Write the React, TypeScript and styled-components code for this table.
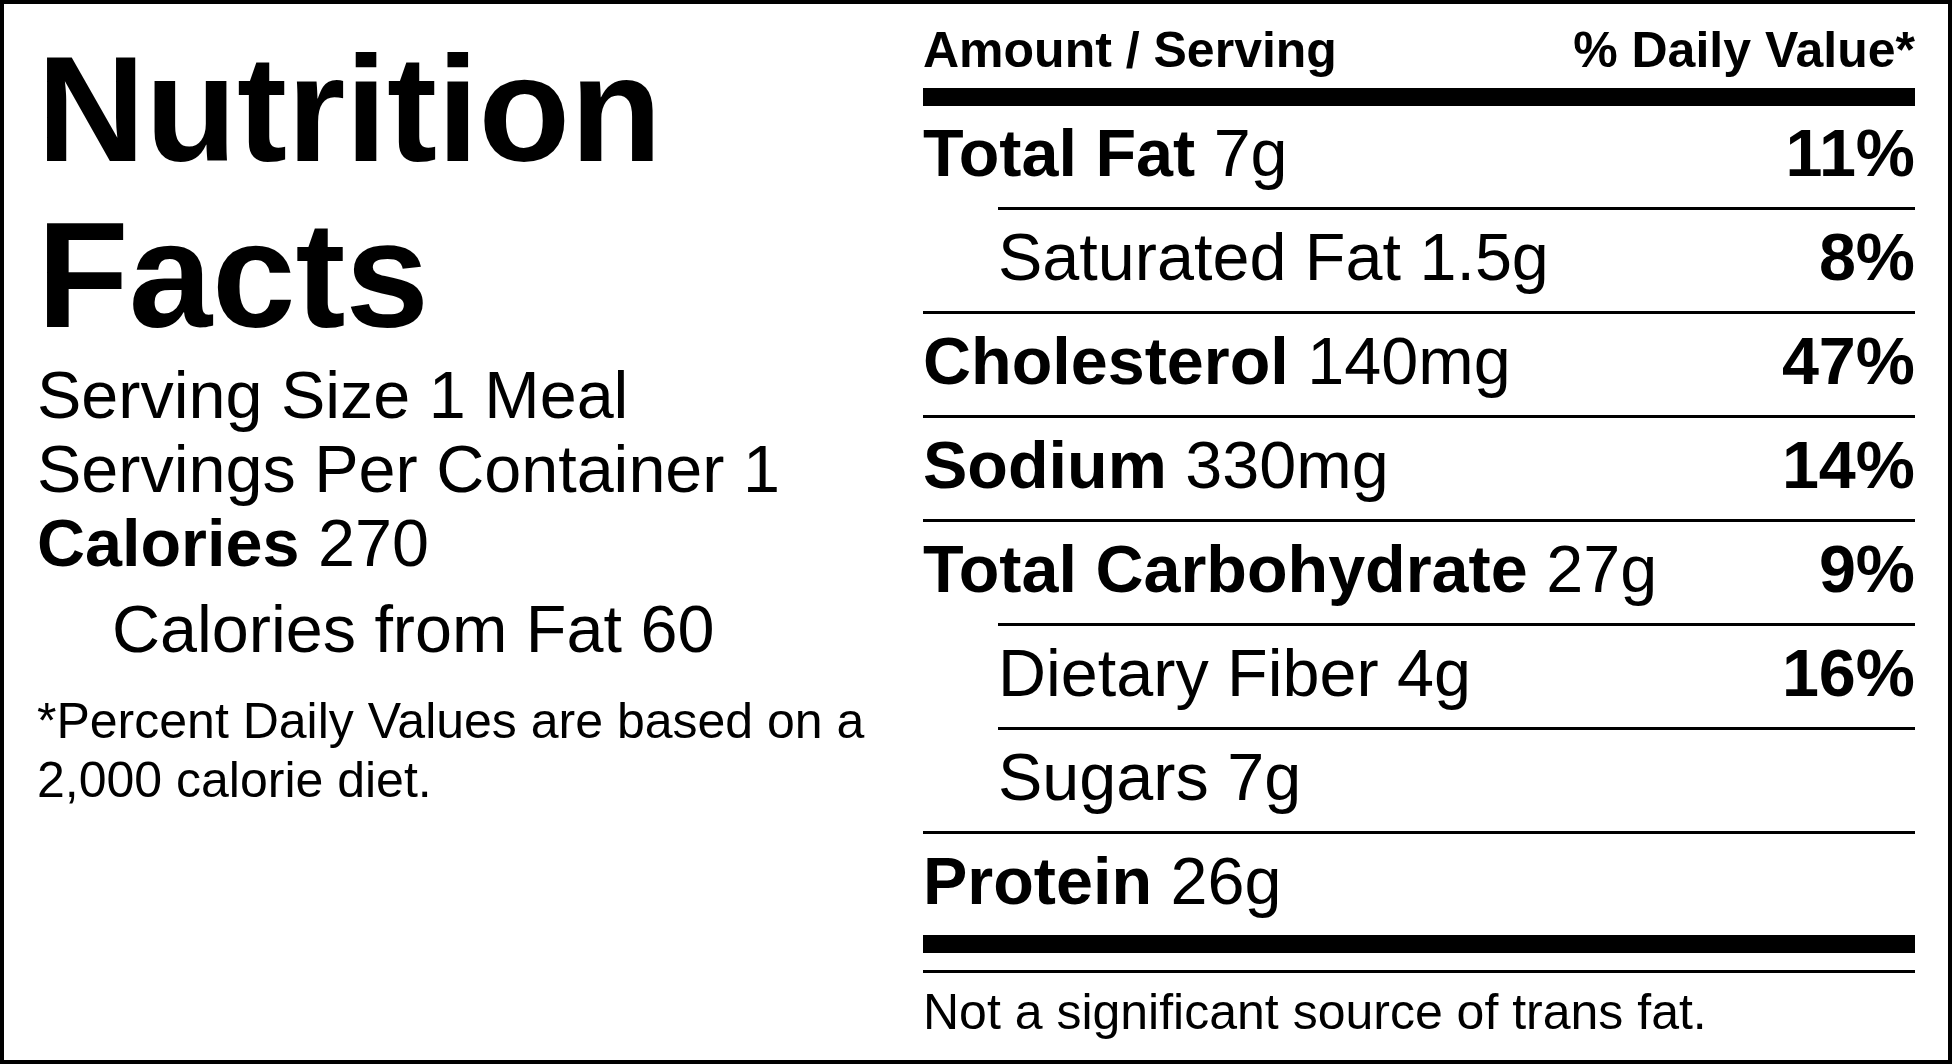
import React from "react";
import styled, { createGlobalStyle } from "styled-components";

const GlobalStyle = createGlobalStyle`
  html, body {
    margin: 0;
    padding: 0;
    background: #ffffff;
  }
  body {
    font-family: "Liberation Sans", Arial, sans-serif;
    color: #000000;
  }
  * { box-sizing: border-box; }
`;

const Label = styled.div`
  width: 1952px;
  height: 1064px;
  border: 4px solid #000;
  background: #fff;
  display: grid;
  grid-template-columns: 1fr 992px;
  column-gap: 40px;
  padding: 0 33px;
  font-family: "Liberation Sans", Arial, sans-serif;
  color: #000;
`;

const LeftColumn = styled.section`
  display: flex;
  flex-direction: column;
  padding-top: 22px;
  min-width: 0;
`;

const Title = styled.h1`
  margin: 0;
  font-size: 150px;
  line-height: 166px;
  font-weight: 700;
  letter-spacing: 0;
`;

const InfoLine = styled.div<{ $indent?: boolean }>`
  font-size: 66.5px;
  line-height: 74px;
  white-space: nowrap;
  padding-left: ${(p) => (p.$indent ? "75px" : "0")};
  margin-top: ${(p) => (p.$indent ? "12px" : "0")};
`;

const Footnote = styled.p`
  margin: 26px 0 0;
  font-size: 50px;
  line-height: 59px;
`;

const RightColumn = styled.section`
  display: flex;
  flex-direction: column;
  padding-top: 18px;
`;

const HeaderRow = styled.div`
  display: flex;
  justify-content: space-between;
  font-size: 50px;
  font-weight: 700;
  line-height: 56px;
  white-space: nowrap;
`;

const Bar = styled.div<{ $gap: number; $size: number }>`
  margin-top: ${(p) => p.$gap}px;
  height: ${(p) => p.$size}px;
  background: #000;
`;

const NutrientRow = styled.div<{ $indent?: boolean; $first?: boolean }>`
  display: flex;
  align-items: center;
  justify-content: space-between;
  height: ${(p) => (p.$first ? "101px" : "104px")};
  padding-bottom: 7px;
  margin-left: ${(p) => (p.$indent ? "75px" : "0")};
  border-top: ${(p) => (p.$first ? "none" : "3px solid #000")};
  font-size: 66.5px;
  line-height: normal;
  white-space: nowrap;
`;

const Percent = styled.span`
  font-weight: 700;
`;

const Strong = styled.b`
  font-weight: 700;
`;

const Disclaimer = styled.p`
  margin: 10px 0 0;
  font-size: 50px;
  line-height: normal;
`;

type Nutrient = {
  name: string;
  amount: string;
  dv?: string;
  bold?: boolean;
  indent?: boolean;
};

const nutrients: Nutrient[] = [
  { name: "Total Fat", amount: "7g", dv: "11%", bold: true },
  { name: "Saturated Fat", amount: "1.5g", dv: "8%", indent: true },
  { name: "Cholesterol", amount: "140mg", dv: "47%", bold: true },
  { name: "Sodium", amount: "330mg", dv: "14%", bold: true },
  { name: "Total Carbohydrate", amount: "27g", dv: "9%", bold: true },
  { name: "Dietary Fiber", amount: "4g", dv: "16%", indent: true },
  { name: "Sugars", amount: "7g", indent: true },
  { name: "Protein", amount: "26g", bold: true },
];

export default function App() {
  return (
    <>
      <GlobalStyle />
      <Label>
        <LeftColumn>
          <Title>Nutrition Facts</Title>
          <InfoLine>Serving Size 1 Meal</InfoLine>
          <InfoLine>Servings Per Container 1</InfoLine>
          <InfoLine>
            <Strong>Calories</Strong> 270
          </InfoLine>
          <InfoLine $indent>Calories from Fat 60</InfoLine>
          <Footnote>
            *Percent Daily Values are based on a 2,000 calorie diet.
          </Footnote>
        </LeftColumn>
        <RightColumn>
          <HeaderRow>
            <span>Amount / Serving</span>
            <span>% Daily Value*</span>
          </HeaderRow>
          <Bar $gap={10} $size={18} />
          {nutrients.map((n, i) => (
            <NutrientRow key={n.name} $indent={n.indent} $first={i === 0}>
              <span>
                {n.bold ? <Strong>{n.name}</Strong> : n.name} {n.amount}
              </span>
              {n.dv ? <Percent>{n.dv}</Percent> : null}
            </NutrientRow>
          ))}
          <Bar $gap={0} $size={18} />
          <Bar $gap={17} $size={3} />
          <Disclaimer>Not a significant source of trans fat.</Disclaimer>
        </RightColumn>
      </Label>
    </>
  );
}
